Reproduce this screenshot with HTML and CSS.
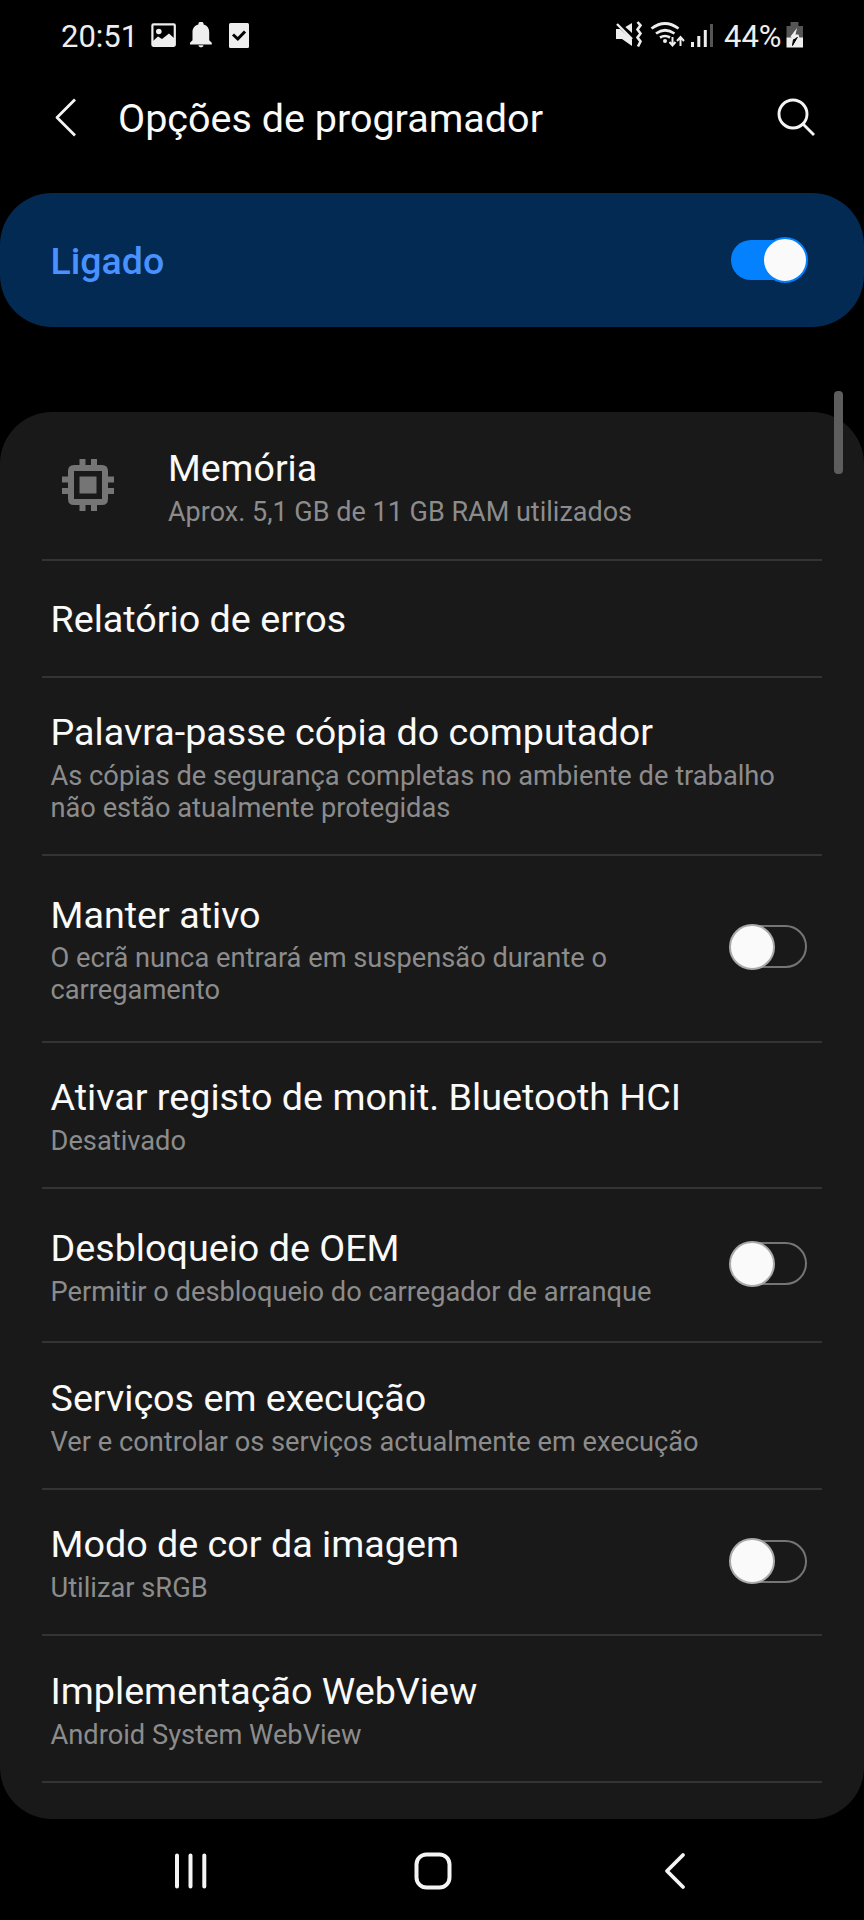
FILE: index.html
```html
<!DOCTYPE html>
<html lang="pt">
<head>
<meta charset="utf-8">
<title>Opções de programador</title>
<link rel="stylesheet" href="styles.css">
</head>
<body>
<div class="screen">
  <header class="status">
    <span class="clock">20:51</span>
    <svg class="status-left" width="100" height="28" viewBox="150 22 100 28">
      <rect x="152.400" y="24.400" width="22.400" height="21.400" rx="1" fill="none" stroke="#eee" stroke-width="2.200"/>
      <circle cx="158.800" cy="31.500" r="2.800" fill="#eee"/>
      <path d="M153 41l5-4.500 4 2.500 7-5.500 6 5.500v7h-22z" fill="#eee"/>
      <path d="M190 44.500v-1.700l2.500-2.600v-8c0-4 2.200-6.800 5.800-7.800a2.700 2.700 0 0 1 5.400 0c3.600 1 5.500 3.800 5.500 7.800v8l2.600 2.600v1.700zM198.500 45.300h5c0 2.700-5 2.700-5 0z" fill="#eee"/>
      <rect x="229" y="23" width="20" height="25" rx="1.500" fill="#eee"/>
      <path d="M233 34.500l4.800 4.500 7.200-7.500" fill="none" stroke="#000" stroke-width="3"/>
    </svg>
    <svg class="status-right" width="98" height="28" viewBox="615 21 98 28">
      <path d="M616 29h6l10-6v23l-10-7h-6z" fill="#eee"/>
      <path d="M616 22l18 16" stroke="#000" stroke-width="5"/>
      <path d="M617 24l15 15" stroke="#eee" stroke-width="2.400"/>
      <path d="M637.500 22l3 3.300-3 4.200 3 4-3 4 3 4-2.500 5" fill="none" stroke="#eee" stroke-width="2.600"/>
      <g fill="none" stroke="#eee" stroke-width="2.700"><path d="M651.500 28.500q13.500-10 27 0M656 33.500q9-6.500 18.500 0M660 37.500q5-3 10 0"/></g>
      <circle cx="665" cy="41" r="2" fill="#eee"/>
      <path d="M672.500 37v8m-3-3l3 3.500 3-3.500M680.500 46v-8m-3.500 3l3.500-4 3.500 4" fill="none" stroke="#eee" stroke-width="2"/>
      <path d="M691 42h3v5h-3zM697.300 36h3v11h-3zM703.800 30h3v17h-3z" fill="#eee"/>
      <path d="M710 24h3v23h-3z" fill="#555"/>
    </svg>
    <span class="battery-text">44%</span>
    <svg class="battery" width="17" height="26" viewBox="786 22 17 26">
      <path d="M786.500 26h4v-4h8v4h4.500v12h-16.500z" fill="#555"/>
      <path d="M786.500 37.500h16.500v10h-16.500z" fill="#eee"/>
      <path d="M797 28l-6.500 8.500 1.500 1.500h7.500l-1-3.500h-3z" fill="#eee"/>
      <path d="M797.500 37l-5 8.500 1-6" fill="#000" stroke="#000"/>
    </svg>
  </header>

  <div class="appbar">
    <svg class="back" width="24" height="42" viewBox="54 97 24 42"><path d="M75 99.500L57 117.500L75 135.500" fill="none" stroke="#f5f5f5" stroke-width="2.800" stroke-linejoin="round"/></svg>
    <h1 class="heading">Opções de programador</h1>
    <svg class="search" width="40" height="40" viewBox="777 97 40 40"><g fill="none" stroke="#f5f5f5" stroke-width="2.900"><circle cx="793" cy="114" r="14"/><path d="M803 124L814 135"/></g></svg>
  </div>

  <section class="master">
    <span class="master-label">Ligado</span>
    <span class="toggle on"><span class="knob"></span></span>
  </section>

  <main class="card">
    <span class="scrollbar"></span>
    <div class="row memory">
      <svg class="chip" width="52" height="52" viewBox="0 0 52 52" fill="#757575">
        <path fill-rule="evenodd" d="M12 6h28q6 0 6 6v28q0 6-6 6h-28q-6 0-6-6v-28q0-6 6-6zM12 12v28h28v-28z"/>
        <path d="M17.500 17.500h17v17h-17zM17.500 0h6v7h-6zM29 0h6v7h-6zM17.500 45h6v7h-6zM29 45h6v7h-6zM0 17.500h7v6h-7zM0 29h7v6h-7zM45 17.500h7v6h-7zM45 29h7v6h-7z"/>
      </svg>
      <div class="text"><h2>Memória</h2><p>Aprox. 5,1 GB de 11 GB RAM utilizados</p></div>
    </div>
    <div class="row single"><div class="text"><h2>Relatório de erros</h2></div></div>
    <div class="row double"><div class="text"><h2>Palavra-passe cópia do computador</h2><p>As cópias de segurança completas no ambiente de trabalho<br>não estão atualmente protegidas</p></div></div>
    <div class="row double-switch"><div class="text"><h2>Manter ativo</h2><p>O ecrã nunca entrará em suspensão durante o<br>carregamento</p></div><span class="toggle"><span class="knob"></span></span></div>
    <div class="row"><div class="text"><h2>Ativar registo de monit. Bluetooth HCI</h2><p>Desativado</p></div></div>
    <div class="row oem"><div class="text"><h2>Desbloqueio de OEM</h2><p>Permitir o desbloqueio do carregador de arranque</p></div><span class="toggle"><span class="knob"></span></span></div>
    <div class="row"><div class="text"><h2>Serviços em execução</h2><p>Ver e controlar os serviços actualmente em execução</p></div></div>
    <div class="row"><div class="text"><h2>Modo de cor da imagem</h2><p>Utilizar sRGB</p></div><span class="toggle"><span class="knob"></span></span></div>
    <div class="row"><div class="text"><h2>Implementação WebView</h2><p>Android System WebView</p></div></div>
  </main>

  <nav class="navbar">
    <svg width="36" height="38" viewBox="0 0 36 38"><path d="M4 3.500v31M17.500 3.500v31M31.300 3.500v31" stroke="#f5f5f5" stroke-width="4" stroke-linecap="round"/></svg>
    <svg class="home" width="40" height="40" viewBox="0 0 40 40"><rect x="3.500" y="3.500" width="33" height="33" rx="10" fill="none" stroke="#f5f5f5" stroke-width="4"/></svg>
    <svg width="24" height="38" viewBox="0 0 24 38"><path d="M20 3L4 19L20 35" fill="none" stroke="#f5f5f5" stroke-width="3.800" stroke-linecap="round" stroke-linejoin="round"/></svg>
  </nav>
</div>
</body>
</html>
```

FILE: styles.css
```css
* { box-sizing: border-box; }
body { margin: 0; background: #000; font-family: Roboto, "Liberation Sans", sans-serif; }
h1, h2, p { margin: 0; font-weight: 400; white-space: nowrap; }
svg { display: block; flex: none; }
.screen { width: 864px; height: 1920px; display: flex; flex-direction: column; overflow: hidden; background: #000; color: #fafafa; }

.status { height: 72px; display: flex; padding: 19px 0 0 61px; color: #eee; font-size: 31px; line-height: 36px; flex: none; }
.clock { width: 89px; }
.status-left { margin-top: 3px; }
.status-right { margin: 2px 0 0 365px; }
.battery-text { width: 62px; margin-left: 11px; white-space: nowrap; }
.battery { margin: 3px 0 0 0; }

.appbar { height: 121px; display: flex; padding-left: 54px; flex: none; }
.back { margin-top: 25px; }
.heading { width: 659px; margin: 24px 0 0 40px; font-size: 39.500px; line-height: 46px; }
.search { margin-top: 25px; }

.master { height: 134px; margin-bottom: 85px; padding: 0 57px 0 50.500px; border-radius: 52px; background: #032a53; display: flex; align-items: center; justify-content: space-between; flex: none; }
.master-label { color: #4891ff; font-size: 37.500px; font-weight: 500; line-height: 44px; padding-top: 2px; }

.toggle { width: 77px; height: 43px; border: 2px solid #757575; border-radius: 22px; display: flex; align-items: center; flex: none; }
.knob { width: 46px; height: 46px; margin-left: -3px; border: 2px solid #aaa; border-radius: 50%; background: #fafafa; flex: none; }
.toggle.on { width: 76px; height: 40px; border: 0; background: #0381fe; justify-content: flex-end; }
.toggle.on .knob { border-color: #0381fe; margin: 0 -1px 0 0; }
.master .toggle { margin-bottom: 1px; }

.card { position: relative; height: 1407px; padding: 0 42px 0 42px; border-radius: 52px; background: #191919; flex: none; }
.scrollbar { position: absolute; left: 834px; top: -21px; width: 9px; height: 83px; border-radius: 4px; background: #5d5d5d; }
.row { height: 146.400px; padding: 32.400px 15px 0 8.500px; border-bottom: 2px solid #343434; display: flex; }
.row .text { flex: 1; }
.row .toggle { margin-top: 17.600px; }
h2 { font-size: 37.700px; line-height: 44px; }
p { margin-top: 6px; color: #8c8c8c; font-size: 27.250px; line-height: 32px; }
.memory { height: 149px; padding-top: 34px; }
.memory h2 { font-size: 37.500px; }
.memory p { font-size: 27px; }
.chip { margin: 13px 54px 0 11.500px; }
.single { height: 117px; padding-top: 36px; }
.double { height: 178px; padding-top: 32px; }
.double-switch { height: 187px; padding-top: 37px; }
.double-switch p { margin-top: 5px; }
.double-switch .toggle { margin-top: 32px; }
.oem { height: 154px; padding-top: 36.400px; }
.oem .toggle { margin-top: 16.600px; }

.navbar { height: 101px; display: flex; align-items: center; padding: 3px 177px 0 173px; justify-content: space-between; flex: none; }
.home { margin-right: 7px; }
```
